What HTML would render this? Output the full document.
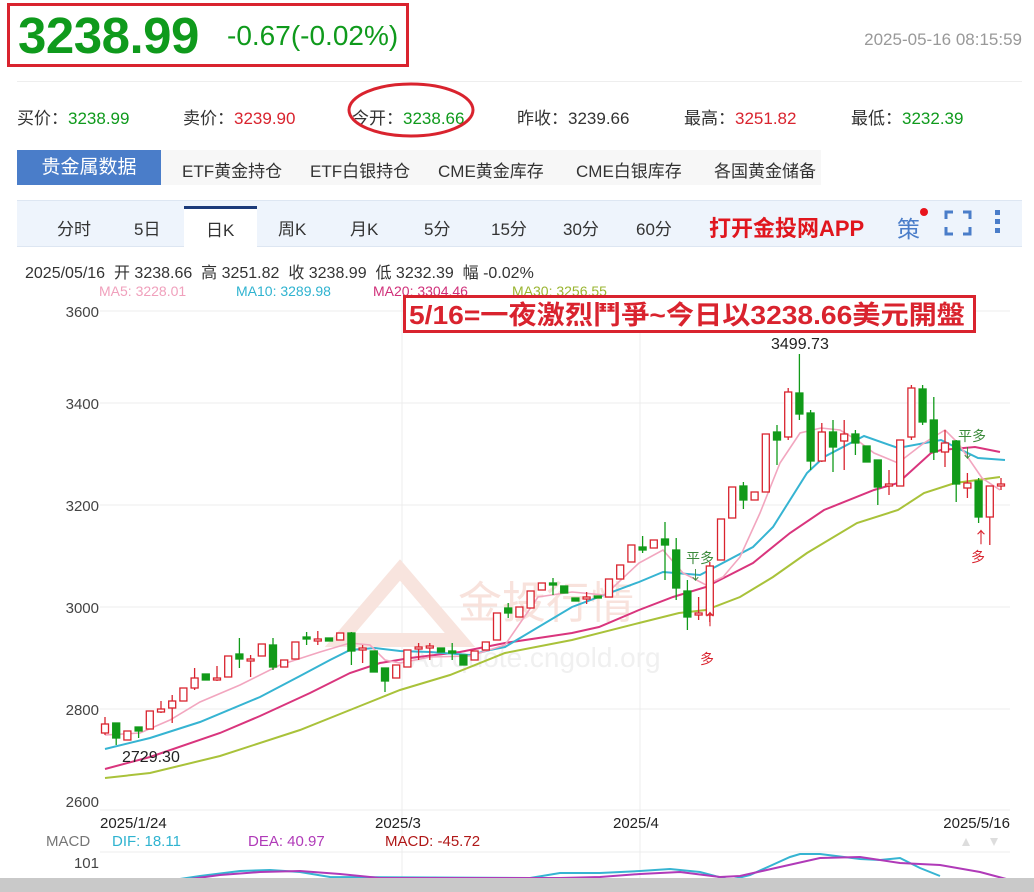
<!DOCTYPE html>
<html><head><meta charset="utf-8"><style>
*{margin:0;padding:0;box-sizing:border-box}
body{width:1034px;height:892px;overflow:hidden;background:#fff;font-family:"Liberation Sans","Noto Sans CJK SC",sans-serif;position:relative;color:#333}
.a{position:absolute;white-space:nowrap}
</style></head><body>
<div class="a" style="left:7px;top:3px;width:402px;height:64px;border:3px solid #d9232e"></div>
<div class="a" style="left:18px;top:6px;font-size:51px;font-weight:bold;color:#0f9a1c;letter-spacing:-0.5px">3238.99</div>
<div class="a" style="left:227px;top:20px;font-size:28px;color:#0f9a1c">-0.67(-0.02%)</div>
<div class="a" style="right:12px;top:30px;font-size:17px;color:#999">2025-05-16 08:15:59</div>
<div class="a" style="left:17px;top:81px;width:1005px;height:1px;background:#eee"></div>
<div class="a" style="left:17px;top:104px;font-size:17px;color:#333">买价：<span style="color:#0f9a1c">3238.99</span></div>
<div class="a" style="left:183px;top:104px;font-size:17px">卖价：<span style="color:#d9232e">3239.90</span></div>
<div class="a" style="left:352px;top:104px;font-size:17px">今开：<span style="color:#0f9a1c">3238.66</span></div>
<div class="a" style="left:517px;top:104px;font-size:17px">昨收：3239.66</div>
<div class="a" style="left:684px;top:104px;font-size:17px">最高：<span style="color:#d9232e">3251.82</span></div>
<div class="a" style="left:851px;top:104px;font-size:17px">最低：<span style="color:#0f9a1c">3232.39</span></div>
<svg class="a" style="left:345px;top:80px" width="135" height="60"><ellipse cx="66" cy="30" rx="62" ry="26" fill="none" stroke="#d9232e" stroke-width="3"/></svg>
<div class="a" style="left:161px;top:150px;width:660px;height:35px;background:#f7f7f7"></div>
<div class="a" style="left:17px;top:150px;width:144px;height:35px;background:#4a7dc9;color:#fff;font-size:19px;line-height:35px;text-align:center">贵金属数据</div>
<div class="a" style="left:182px;top:157px;font-size:17px">ETF黄金持仓</div>
<div class="a" style="left:310px;top:157px;font-size:17px">ETF白银持仓</div>
<div class="a" style="left:438px;top:157px;font-size:17px">CME黄金库存</div>
<div class="a" style="left:576px;top:157px;font-size:17px">CME白银库存</div>
<div class="a" style="left:714px;top:157px;font-size:17px">各国黄金储备</div>
<div class="a" style="left:17px;top:200px;width:1005px;height:47px;background:#eef4fc;border-top:1px solid #dde6f2;border-bottom:1px solid #dde6f2"></div>
<div class="a" style="left:184px;top:206px;width:73px;height:41px;background:#fff;border-top:3px solid #1b3a7a"></div>
<div class="a" style="left:57px;top:215px;font-size:17px">分时</div>
<div class="a" style="left:134px;top:215px;font-size:17px">5日</div>
<div class="a" style="left:206px;top:216px;font-size:17px">日K</div>
<div class="a" style="left:278px;top:215px;font-size:17px">周K</div>
<div class="a" style="left:350px;top:215px;font-size:17px">月K</div>
<div class="a" style="left:424px;top:215px;font-size:17px">5分</div>
<div class="a" style="left:491px;top:215px;font-size:17px">15分</div>
<div class="a" style="left:563px;top:215px;font-size:17px">30分</div>
<div class="a" style="left:636px;top:215px;font-size:17px">60分</div>
<div class="a" style="left:709px;top:211px;font-size:22px;font-weight:bold;color:#e0161e">打开金投网APP</div>
<div class="a" style="left:897px;top:210px;font-size:23px;color:#4a7dc9">策</div>
<div class="a" style="left:920px;top:208px;width:8px;height:8px;border-radius:50%;background:#e8141c"></div>
<svg class="a" style="left:944px;top:210px" width="28" height="26" fill="none" stroke="#4a7dc9" stroke-width="3"><path d="M2 9V2H9M19 2H26V9M26 17V24H19M9 24H2V17"/></svg>
<svg class="a" style="left:994px;top:209px" width="8" height="26" fill="#4a7dc9"><rect x="1" y="1" width="5" height="5"/><rect x="1" y="10" width="5" height="5"/><rect x="1" y="19" width="5" height="5"/></svg>
<div class="a" style="left:25px;top:259px;font-size:16px;color:#333">2025/05/16&nbsp; 开 3238.66&nbsp; 高 3251.82&nbsp; 收 3238.99&nbsp; 低 3232.39&nbsp; 幅 -0.02%</div>
<div class="a" style="left:99px;top:283px;font-size:14px;color:#f0a0bc">MA5: 3228.01</div>
<div class="a" style="left:236px;top:283px;font-size:14px;color:#2fb3d0">MA10: 3289.98</div>
<div class="a" style="left:373px;top:283px;font-size:14px;color:#d0307a">MA20: 3304.46</div>
<div class="a" style="left:512px;top:283px;font-size:14px;color:#9ab530">MA30: 3256.55</div>

<svg class="a" style="left:0;top:0" width="1034" height="892">
<g stroke="#ececec" stroke-width="1">
<line x1="100" y1="311" x2="1010" y2="311"/><line x1="100" y1="403" x2="1010" y2="403"/><line x1="100" y1="505" x2="1010" y2="505"/><line x1="100" y1="607" x2="1010" y2="607"/><line x1="100" y1="709" x2="1010" y2="709"/><line x1="100" y1="810" x2="1010" y2="810"/><line x1="100" y1="852" x2="1010" y2="852"/>
<line x1="402" y1="300" x2="402" y2="878"/><line x1="640" y1="300" x2="640" y2="878"/>
</g>
<g font-family="Liberation Sans, sans-serif" font-size="15" fill="#444" text-anchor="end">
<text x="99" y="317">3600</text><text x="99" y="409">3400</text><text x="99" y="511">3200</text><text x="99" y="613">3000</text><text x="99" y="715">2800</text><text x="99" y="807">2600</text><text x="99" y="868">101</text>
</g>
<path d="M340 640 L400 570 L460 640 Z" fill="none" stroke="#f8e4de" stroke-width="14"/>
<text x="458" y="618" font-size="44" fill="#f8e2dc" font-family="Noto Sans CJK SC, sans-serif">金投行情</text>
<text x="410" y="667" font-size="28" fill="#f0f0f0" font-family="Liberation Sans, sans-serif">Au  quote.cngold.org</text>
<g fill="none" stroke-width="2">
<polyline stroke="#a9c23a" points="105,778 150,773 220,756 300,730 360,706 400,690 450,675 505,653 572,640 639,623 679,613 706,610 740,597 773,577 807,553 857,523 898,510 924,493 955,483 1000,477"/>
<polyline stroke="#d9357d" points="105,769 150,757 220,733 260,716 310,693 350,673 380,663 410,658 460,652 505,643 572,633 599,627 639,610 673,597 706,587 753,563 790,533 824,510 874,490 898,483 931,453 941,450 975,447 1000,452"/>
<polyline stroke="#36b4d2" points="105,749 150,738 200,722 260,697 300,676 330,660 350,650 375,648 400,651 430,652 470,655 490,650 505,647 572,607 639,582 663,572 700,575 753,547 773,527 807,473 824,457 864,436 898,448 941,440 978,458 1005,460"/>
<polyline stroke="#f2a6bf" stroke-width="1.6" points="105,735 140,733 170,720 200,702 240,685 280,665 320,652 350,643 370,645 385,660 400,663 430,657 470,656 505,645 538,597 572,592 605,595 639,563 663,550 683,573 706,585 723,577 740,557 760,513 780,463 800,433 821,428 840,430 857,440 874,453 898,463 924,443 945,430 958,443 982,478 1000,490"/>
</g>
<g stroke-width="1.3">
<g stroke="#d9232e" fill="#fff">
<line x1="105" y1="717" x2="105" y2="735"/><rect x="101.5" y="724" width="7" height="9"/>
<rect x="123.9" y="731" width="7" height="9"/>
<rect x="146.3" y="711" width="7" height="18"/>
<line x1="161" y1="701" x2="161" y2="713"/><rect x="157.5" y="709" width="7" height="3"/>
<line x1="172.2" y1="695" x2="172.2" y2="723"/><rect x="168.7" y="701" width="7" height="7"/>
<rect x="179.9" y="688" width="7" height="13"/>
<line x1="194.6" y1="668" x2="194.6" y2="690"/><rect x="191.1" y="678" width="7" height="10"/>
<line x1="217" y1="666" x2="217" y2="681"/><rect x="213.5" y="678" width="7" height="2"/>
<rect x="224.7" y="656" width="7" height="21"/>
<line x1="250.6" y1="655" x2="250.6" y2="677"/><rect x="247.1" y="659" width="7" height="2"/>
<rect x="258.3" y="644" width="7" height="12"/>
<rect x="280.7" y="660" width="7" height="7"/>
<rect x="291.9" y="642" width="7" height="17"/>
<line x1="317.8" y1="631" x2="317.8" y2="645"/><rect x="314.3" y="639" width="7" height="2"/>
<rect x="336.7" y="633" width="7" height="7"/>
<line x1="362.6" y1="645" x2="362.6" y2="663"/><rect x="359.1" y="648" width="7" height="2"/>
<rect x="392.7" y="665" width="7" height="13"/>
<rect x="403.9" y="650" width="7" height="17"/>
<line x1="418.6" y1="643" x2="418.6" y2="660"/><rect x="415.1" y="647" width="7" height="2"/>
<line x1="429.8" y1="643" x2="429.8" y2="660"/><rect x="426.3" y="646" width="7" height="2"/>
<rect x="471.1" y="651" width="7" height="9"/>
<rect x="482.3" y="642" width="7" height="8"/>
<rect x="493.5" y="613" width="7" height="27"/>
<rect x="515.9" y="607" width="7" height="10"/>
<rect x="527.1" y="591" width="7" height="17"/>
<rect x="538.3" y="583" width="7" height="7"/>
<line x1="586.6" y1="592" x2="586.6" y2="604"/><rect x="583.1" y="597" width="7" height="2"/>
<rect x="605.5" y="579" width="7" height="18"/>
<rect x="616.7" y="565" width="7" height="14"/>
<rect x="627.9" y="545" width="7" height="17"/>
<rect x="650.3" y="540" width="7" height="8"/>
<line x1="698.6" y1="597" x2="698.6" y2="620"/><rect x="695.1" y="613" width="7" height="2"/>
<line x1="709.8" y1="562" x2="709.8" y2="622"/><rect x="706.3" y="566" width="7" height="49"/>
<rect x="717.5" y="519" width="7" height="41"/>
<rect x="728.7" y="487" width="7" height="31"/>
<rect x="751.1" y="492" width="7" height="8"/>
<rect x="762.3" y="434" width="7" height="58"/>
<line x1="788.2" y1="388" x2="788.2" y2="440"/><rect x="784.7" y="392" width="7" height="45"/>
<line x1="821.8" y1="423" x2="821.8" y2="462"/><rect x="818.3" y="432" width="7" height="29"/>
<line x1="844.2" y1="420" x2="844.2" y2="470"/><rect x="840.7" y="434" width="7" height="7"/>
<line x1="889" y1="470" x2="889" y2="495"/><rect x="885.5" y="484" width="7" height="2"/>
<rect x="896.7" y="440" width="7" height="46"/>
<line x1="911.4" y1="385" x2="911.4" y2="440"/><rect x="907.9" y="388" width="7" height="49"/>
<line x1="945" y1="430" x2="945" y2="467"/><rect x="941.5" y="443" width="7" height="9"/>
<line x1="967.4" y1="473" x2="967.4" y2="498"/><rect x="963.9" y="483" width="7" height="5"/>
<line x1="989.8" y1="486" x2="989.8" y2="545"/><rect x="986.3" y="486" width="7" height="31"/>
<line x1="1001" y1="478" x2="1001" y2="490"/><rect x="997.5" y="484" width="7" height="2"/>
</g>
<g stroke="#119a19" fill="#119a19">
<line x1="116.2" y1="723" x2="116.2" y2="745"/><rect x="112.7" y="723" width="7" height="15"/>
<line x1="138.6" y1="727" x2="138.6" y2="738"/><rect x="135.1" y="727" width="7" height="4"/>
<rect x="202.3" y="674" width="7" height="6"/>
<line x1="239.4" y1="638" x2="239.4" y2="668"/><rect x="235.9" y="654" width="7" height="5"/>
<line x1="273" y1="638" x2="273" y2="670"/><rect x="269.5" y="645" width="7" height="22"/>
<line x1="306.6" y1="632" x2="306.6" y2="645"/><rect x="303.1" y="637" width="7" height="2"/>
<rect x="325.5" y="638" width="7" height="3"/>
<line x1="351.4" y1="632" x2="351.4" y2="665"/><rect x="347.9" y="633" width="7" height="18"/>
<rect x="370.3" y="651" width="7" height="21"/>
<line x1="385" y1="668" x2="385" y2="692"/><rect x="381.5" y="668" width="7" height="13"/>
<rect x="437.5" y="648" width="7" height="4"/>
<line x1="452.2" y1="643" x2="452.2" y2="660"/><rect x="448.7" y="651" width="7" height="2"/>
<rect x="459.9" y="655" width="7" height="10"/>
<line x1="508.2" y1="603" x2="508.2" y2="618"/><rect x="504.7" y="608" width="7" height="5"/>
<line x1="553" y1="578" x2="553" y2="595"/><rect x="549.5" y="583" width="7" height="2"/>
<rect x="560.7" y="586" width="7" height="7"/>
<rect x="571.9" y="598" width="7" height="3"/>
<rect x="594.3" y="596" width="7" height="2"/>
<line x1="642.6" y1="536" x2="642.6" y2="553"/><rect x="639.1" y="547" width="7" height="3"/>
<line x1="665" y1="522" x2="665" y2="580"/><rect x="661.5" y="539" width="7" height="6"/>
<line x1="676.2" y1="538" x2="676.2" y2="600"/><rect x="672.7" y="550" width="7" height="38"/>
<line x1="687.4" y1="580" x2="687.4" y2="630"/><rect x="683.9" y="591" width="7" height="26"/>
<line x1="743.4" y1="482" x2="743.4" y2="509"/><rect x="739.9" y="486" width="7" height="14"/>
<line x1="777" y1="425" x2="777" y2="465"/><rect x="773.5" y="432" width="7" height="8"/>
<line x1="799.4" y1="354" x2="799.4" y2="420"/><rect x="795.9" y="393" width="7" height="21"/>
<line x1="810.6" y1="410" x2="810.6" y2="470"/><rect x="807.1" y="413" width="7" height="48"/>
<line x1="833" y1="420" x2="833" y2="472"/><rect x="829.5" y="432" width="7" height="15"/>
<line x1="855.4" y1="430" x2="855.4" y2="455"/><rect x="851.9" y="434" width="7" height="9"/>
<rect x="863.1" y="446" width="7" height="16"/>
<line x1="877.8" y1="460" x2="877.8" y2="505"/><rect x="874.3" y="460" width="7" height="27"/>
<line x1="922.6" y1="385" x2="922.6" y2="425"/><rect x="919.1" y="389" width="7" height="33"/>
<line x1="933.8" y1="397" x2="933.8" y2="460"/><rect x="930.3" y="420" width="7" height="32"/>
<line x1="956.2" y1="440" x2="956.2" y2="502"/><rect x="952.7" y="441" width="7" height="43"/>
<line x1="978.6" y1="478" x2="978.6" y2="523"/><rect x="975.1" y="481" width="7" height="36"/>
</g>
</g>
<text x="122" y="762" font-size="16" fill="#222" font-family="Liberation Sans, sans-serif">2729.30</text>
<text x="771" y="349" font-size="16" fill="#222" font-family="Liberation Sans, sans-serif">3499.73</text>
<g font-family="Noto Sans CJK SC, sans-serif" font-size="14">
<text x="686" y="563" fill="#3a8a3a">平多</text><text x="689" y="580" fill="#3a8a3a" font-size="13">↓</text>
<text x="702" y="625" fill="#d9232e" font-size="16">↑</text><text x="700" y="664" fill="#d9232e">多</text>
<text x="958" y="441" fill="#3a8a3a">平多</text><text x="961" y="458" fill="#3a8a3a" font-size="13">↓</text>
<text x="973" y="543" fill="#d9232e" font-size="16">↑</text><text x="971" y="562" fill="#d9232e">多</text>
</g>
<rect x="404.5" y="296.5" width="570" height="35" fill="#fff" stroke="#d9232e" stroke-width="3"/>
<text x="409" y="324" font-size="26" font-weight="bold" fill="#d9232e" textLength="556" lengthAdjust="spacingAndGlyphs" font-family="Liberation Sans, Noto Sans CJK TC, sans-serif">5/16=一夜激烈鬥爭~今日以3238.66美元開盤</text>
<g font-family="Liberation Sans, sans-serif" font-size="15" fill="#222">
<text x="100" y="828">2025/1/24</text><text x="375" y="828">2025/3</text><text x="613" y="828">2025/4</text><text x="1010" y="828" text-anchor="end">2025/5/16</text>
</g>
<g font-family="Liberation Sans, sans-serif" font-size="15">
<text x="46" y="846" fill="#777">MACD</text><text x="112" y="846" fill="#2fb3d0">DIF: 18.11</text><text x="248" y="846" fill="#b03ab8">DEA: 40.97</text><text x="385" y="846" fill="#b01818">MACD: -45.72</text>
</g>
<path d="M962 846l4-8 4 8z" fill="#ddd"/><path d="M990 838l4 8 4-8z" fill="#ddd"/>
<polyline fill="none" stroke="#36b4d2" stroke-width="2" points="180,879 200,876 240,871 270,870 300,872 330,877 530,878 560,873 600,873 640,871 670,869 700,872 730,880 750,875 770,866 790,857 800,854 820,854 860,859 880,860 900,858 920,868 940,876"/>
<polyline fill="none" stroke="#b03ab8" stroke-width="2" points="190,879 220,875 260,872 300,871 340,874 380,878 560,878 600,877 640,874 680,872 720,877 740,876 780,867 820,858 860,857 900,863 940,865 980,872 1010,880"/>
<rect x="0" y="878" width="1034" height="14" fill="#c9c9c9"/>
</svg>
</body></html>
